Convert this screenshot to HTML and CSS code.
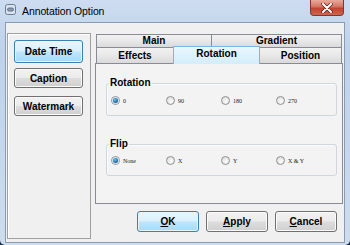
FILE: index.html
```html
<!DOCTYPE html>
<html>

<head>
    <title>Annotation Option</title>
    <link rel="stylesheet" href="styles.css">
</head>

<body>
    <div class="window">
        <div class="titlebar">
            <svg class="app-icon" width="11" height="11" viewBox="0 0 11 11">
                <rect x="0.5" y="0.5" width="10" height="10" rx="2" fill="#d9e2ec" stroke="#6d7f95"/>
                <rect x="2.5" y="4" width="6" height="3" rx="1.5" fill="#8e9db0" stroke="#4f6077" stroke-width="0.8"/>
            </svg>
            <span class="title">Annotation Option</span>
            <div class="close">
                <svg width="12" height="10" viewBox="0 0 12 10">
                    <path d="M2 1 L10 9 M10 1 L2 9" stroke="#5a1a14" stroke-width="3.4" stroke-linecap="round"/>
                    <path d="M2 1 L10 9 M10 1 L2 9" stroke="#ffffff" stroke-width="2" stroke-linecap="round"/>
                </svg>
            </div>
        </div>

        <div class="client">
            <div class="side">
                <button class="btn default side-btn first">Date Time</button>
                <button class="btn side-btn">Caption</button>
                <button class="btn side-btn last">Watermark</button>
            </div>

            <div class="main">
                <div class="tab-row">
                    <div class="tab tab-main">Main</div>
                    <div class="tab tab-gradient">Gradient</div>
                </div>
                <div class="tab-row">
                    <div class="tab tab-effects">Effects</div>
                    <div class="tab tab-rotation selected">Rotation</div>
                    <div class="tab tab-position">Position</div>
                </div>

                <div class="page">
                    <fieldset class="group">
                        <legend>Rotation</legend>
                        <div class="options">
                            <label class="opt"><span class="radio checked"></span>0</label>
                            <label class="opt"><span class="radio"></span>90</label>
                            <label class="opt"><span class="radio"></span>180</label>
                            <label class="opt"><span class="radio"></span>270</label>
                        </div>
                    </fieldset>

                    <fieldset class="group flip">
                        <legend>Flip</legend>
                        <div class="options">
                            <label class="opt"><span class="radio checked"></span>None</label>
                            <label class="opt"><span class="radio"></span>X</label>
                            <label class="opt"><span class="radio"></span>Y</label>
                            <label class="opt"><span class="radio"></span>X &amp; Y</label>
                        </div>
                    </fieldset>
                </div>

                <div class="actions">
                    <button class="btn default action"><u>O</u>K</button>
                    <button class="btn action"><u>A</u>pply</button>
                    <button class="btn action"><u>C</u>ancel</button>
                </div>
            </div>
        </div>
    </div>
</body>

</html>
```

FILE: styles.css
```css
* {
    box-sizing: border-box;
}

html,
body {
    margin: 0;
    padding: 0;
}

body {
    background: #15304f;
    font-family: "Liberation Sans", Arial, sans-serif;
    color: #000;
}

.window {
    width: 350px;
    height: 245px;
    display: flex;
    flex-direction: column;
    background: linear-gradient(#cddcf0, #bfd2ea 20%, #c6d7ec 60%, #cfdcec);
    border-radius: 0 0 5px 5px;
}

/* Title bar */
.titlebar {
    height: 22px;
    display: flex;
    align-items: flex-start;
}

.app-icon {
    margin: 4px 0 0 5px;
}

.title {
    margin: 5px 0 0 6px;
    font-size: 10.5px;
    line-height: 12px;
    letter-spacing: -0.1px;
}

.close {
    margin-left: auto;
    margin-right: 6px;
    width: 34px;
    height: 16px;
    display: flex;
    align-items: center;
    justify-content: center;
    border: 1px solid #84352c;
    border-top: none;
    border-radius: 0 0 4px 4px;
    background: linear-gradient(#e9a99b, #d47463 45%, #c04330 55%, #d0664f);
}

/* Client area */
.client {
    flex: 1;
    display: flex;
    margin: 0 5px 2px 5px;
    border: 1px solid #8a9cb4;
    background: #f0f0f0;
}

.side {
    width: 84px;
    margin: 10px 0 3px 1px;
    padding: 6px 0 0 6px;
    border: 1px solid #a0a0a0;
    box-shadow: inset 1px 1px 0 #fff;
    display: flex;
    flex-direction: column;
}

.btn {
    font-family: "Liberation Sans", Arial, sans-serif;
    font-size: 10px;
    font-weight: bold;
    color: #000;
    padding: 0;
    border: 1px solid #707070;
    border-radius: 3px;
    background: linear-gradient(#f2f2f2, #ebebeb 48%, #dddddd 52%, #cfcfcf);
    box-shadow: inset 0 0 0 1px #fbfbfb;
}

.btn.default {
    border-color: #3c7fb1;
    background: linear-gradient(#eaf6fd, #d9f0fc 48%, #bee6fd 52%, #a7d9f5);
    box-shadow: inset 0 0 0 1px #e6f5fd;
}

.side-btn {
    width: 69px;
    height: 20px;
    margin-bottom: 5px;
}

.side-btn.first {
    height: 23px;
}

.side-btn.last {
    margin-top: 3px;
}

/* Tabs */
.main {
    width: 248px;
    margin: 11px 0 0 4px;
    display: flex;
    flex-direction: column;
}

.tab-row {
    display: flex;
    padding-left: 1px;
}

.tab {
    height: 13px;
    border: 1px solid #898c95;
    border-bottom: none;
    background: linear-gradient(#f2f2f2, #e8e8e8 50%, #dadada);
    font-size: 10px;
    font-weight: bold;
    line-height: 12px;
    text-align: center;
}

.tab + .tab {
    margin-left: -1px;
}

.tab-main {
    width: 116px;
}

.tab-gradient {
    width: 131px;
}

.tab-row + .tab-row .tab {
    height: 16px;
    line-height: 15px;
}

.tab-effects {
    width: 78px;
}

.tab-rotation {
    width: 87px;
}

.tab-position {
    width: 83px;
}

.tab-row + .tab-row .tab.selected {
    height: 18px;
    margin-top: -1px;
    margin-bottom: -1px;
    line-height: 13px;
    position: relative;
    z-index: 1;
    border-color: #7eb4ea;
    background: linear-gradient(#eaf6fd, #dcf1fc 60%, #d4eefb);
}

.page {
    height: 141px;
    border: 1px solid #898c95;
    background: #f3f3f3;
    padding: 13px 5px 0 10px;
}

.group {
    margin: 0;
    padding: 0;
    border: 1px solid #d0d7dc;
    border-radius: 3px;
    box-shadow: inset 1px 1px 0 #fbfbfb;
}

.group legend {
    margin-left: 2px;
    padding: 0 1px;
    font-size: 10px;
    font-weight: bold;
    line-height: 12px;
}

.group.flip {
    margin-top: 22px;
}

.options {
    display: grid;
    grid-template-columns: repeat(4, 55px);
    padding: 7px 0 10px 4px;
}

.flip .options {
    padding-top: 6px;
}

.opt {
    display: flex;
    align-items: center;
    height: 9px;
    font-family: "Liberation Serif", "Times New Roman", serif;
    font-size: 6px;
    color: #222;
}

.radio {
    width: 9px;
    height: 9px;
    margin-right: 3px;
    border-radius: 50%;
    border: 1px solid #8e8f8f;
    background: radial-gradient(circle at 60% 65%, #fbfbfb, #d8d8d8);
    display: flex;
    align-items: center;
    justify-content: center;
}

.radio.checked::after {
    content: "";
    width: 5px;
    height: 5px;
    border-radius: 50%;
    background: radial-gradient(circle at 40% 35%, #6ec2f0, #1d5e93 70%);
    box-shadow: 0 0 0 1px #c9dff0;
}

/* Dialog buttons */
.actions {
    display: flex;
    justify-content: flex-end;
    gap: 7px;
    margin-top: 7px;
    padding-right: 6px;
}

.action {
    width: 62px;
    height: 21px;
}
```
